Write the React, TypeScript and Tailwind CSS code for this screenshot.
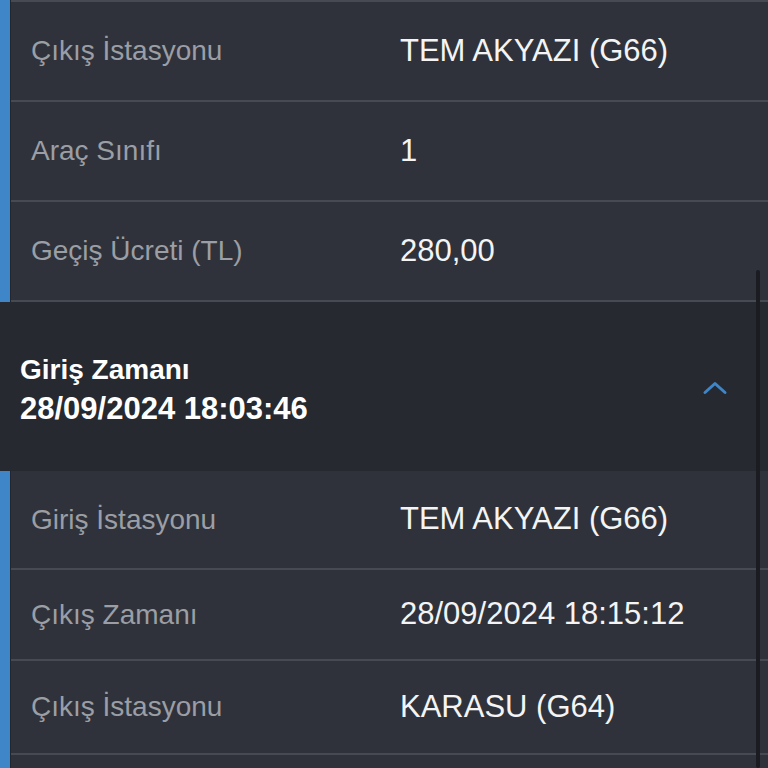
import React from 'react';

type Row = { label: string; value: string; h: string };

const topRows: Row[] = [
  { label: 'Çıkış İstasyonu', value: 'TEM AKYAZI (G66)', h: 'h-[100px]' },
  { label: 'Araç Sınıfı', value: '1', h: 'h-[100px]' },
  { label: 'Geçiş Ücreti (TL)', value: '280,00', h: 'h-[100px]' },
];

const bottomRows: Row[] = [
  { label: 'Giriş İstasyonu', value: 'TEM AKYAZI (G66)', h: 'h-[99px]' },
  { label: 'Çıkış Zamanı', value: '28/09/2024 18:15:12', h: 'h-[91px]' },
  { label: 'Çıkış İstasyonu', value: 'KARASU (G64)', h: 'h-[94px]' },
];

function DetailRow({ row }: { row: Row }) {
  return (
    <div className={`flex items-center border-b-2 border-[#464a52] ${row.h}`}>
      <span className="w-[389px] pl-5 text-[28px] text-[#9b9ea4] shrink-0">{row.label}</span>
      <span className="text-[31px] text-[#f4f4f5]">{row.value}</span>
    </div>
  );
}

function Section({ rows, topBorder }: { rows: Row[]; topBorder?: boolean }) {
  return (
    <div className="flex">
      <div className="w-[10px] shrink-0 bg-[#3e86c7]" />
      <div className="w-[1px] shrink-0 bg-[#23262c]" />
      <div className={`flex-1 flex flex-col ${topBorder ? 'border-t-2 border-[#464a52]' : ''}`}>
        {rows.map((r) => (
          <DetailRow key={r.label + r.value} row={r} />
        ))}
        {!topBorder && <div className="h-[40px]" />}
      </div>
    </div>
  );
}

export default function App() {
  return (
    <div
      className="relative w-[768px] h-[768px] overflow-hidden bg-[#2f323a]"
      style={{ fontFamily: '"Liberation Sans", Arial, sans-serif' }}
    >
      <Section rows={topRows} topBorder />
      <div className="h-[169px] flex items-center justify-between bg-[#262930] pl-5 pr-[40px]">
        <div className="flex flex-col font-bold text-white leading-[39px] pt-[4px]">
          <span className="text-[28px]">Giriş Zamanı</span>
          <span className="text-[31px]">28/09/2024 18:03:46</span>
        </div>
        <svg width="26" height="14" viewBox="0 0 26 14" fill="none" className="mt-[2px]">
          <polyline
            points="3,11.5 13,2.5 23,11.5"
            stroke="#3e86c7"
            strokeWidth="3"
            strokeLinecap="round"
            strokeLinejoin="round"
          />
        </svg>
      </div>
      <Section rows={bottomRows} />
      <div className="absolute right-[8px] top-[270px] bottom-0 w-[4px] rounded-full bg-[#1a1c21]" />
    </div>
  );
}
